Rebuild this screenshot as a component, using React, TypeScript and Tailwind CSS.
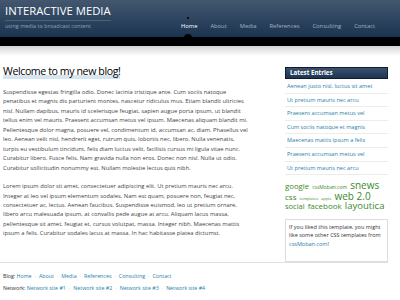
import React from 'react'

const NAV = ['Home', 'About', 'Media', 'References', 'Consulting', 'Contact']

const ENTRIES = [
  'Aenean justo nisl, luctus sit amet',
  'Ut pretium mauris nec arcu',
  'Praesent accumsan metus vel',
  'Cum sociis natoque et magnis',
  'Maecenas mattis ipsum a felis',
  'Praesent accumsan metus vel',
  'Ut pretium mauris nec arcu',
]

const P1 = [
  'Suspendisse egestas fringilla odio. Donec lacinia tristique ante. Cum sociis natoque',
  'penatibus et magnis dis parturient montes, nascetur ridiculus mus. Etiam blandit ultricies',
  'nisl. Nullam dapibus, mauris id scelerisque feugiat, sapien augue porta ipsum, ut blandit',
  'tellus enim vel mauris. Praesent accumsan metus vel ipsum. Maecenas aliquam blandit mi.',
  'Pellentesque dolor magna, posuere vel, condimentum id, accumsan ac, diam. Phasellus vel',
  'leo. Aenean velit nisl, hendrerit eget, rutrum quis, lobortis nec, libero. Nulla venenatis,',
  'turpis eu vestibulum tincidunt, felis diam luctus velit, facilisis cursus mi ligula vitae nunc.',
  'Curabitur libero. Fusce felis. Nam gravida nulla non eros. Donec non nisl. Nulla ut odio.',
  'Curabitur sollicitudin nonummy est. Nullam molestie lectus quis nibh.',
]

const P2 = [
  'Lorem ipsum dolor sit amet, consectetuer adipiscing elit. Ut pretium mauris nec arcu.',
  'Integer at leo vel ipsum elementum sodales. Nam est quam, posuere non, feugiat nec,',
  'consectetuer ac, lectus. Aenean faucibus. Suspendisse euismod, leo ut pretium ornare,',
  'libero arcu malesuada ipsum, at convallis pede augue at arcu. Aliquam lacus massa,',
  'pellentesque sit amet, feugiat et, cursus volutpat, massa. Integer nibh. Maecenas mattis',
  'ipsum a felis. Curabitur sodales lacus at massa. In hac habitasse platea dictumst.',
]

function Dot() {
  return <span className="px-[3px] text-[#9a9a9a]">·</span>
}

function A({ children }: { children: React.ReactNode }) {
  return <span className="text-[#1f7fa8]">{children}</span>
}

export default function App() {
  return (
    <div className="h-[300px] w-[400px] overflow-hidden bg-white font-['Open_Sans',sans-serif]">
      {/* header */}
      <div className="relative h-[37px] bg-gradient-to-b from-[#43576f] to-[#1b3451]">
        <div className="absolute left-[5px] top-[3px]">
          <div className="border-b border-[#4d6178] pb-[1px] text-[11.3px] leading-[16px] text-white">
            INTERACTIVE MEDIA
          </div>
          <div className="mt-[1px] text-[5.5px] text-[#8fa2b8]">using media to broadcast content</div>
        </div>
        <ul className="absolute left-[181px] top-[22px] flex gap-[13px] text-[5.8px] leading-[9px] text-[#a3b2c4]">
          {NAV.map((n, i) => (
            <li key={n} className={i === 0 ? 'relative text-white' : ''}>
              {n}
              {i === 0 ? (
                <>
                  <span className="absolute left-[6px] top-[-5px] h-[2px] w-[2px] rounded-full bg-black" />
                  <span className="absolute left-[3px] top-[12px] h-[8px] w-[8px] rounded-full bg-black" />
                </>
              ) : null}
            </li>
          ))}
        </ul>
      </div>
      <div className="h-[9px] bg-black" />
      <div className="h-[10px] bg-gradient-to-b from-[#d4d4d4] to-white" />

      <div className="flex pl-[3px] pr-[12px]">
        {/* main */}
        <div className="w-[262px]">
          <h1 className="mt-[8px] inline-block bg-[linear-gradient(to_bottom,transparent_72%,#d6e6f1_72%)] text-[10.6px] leading-[15px] tracking-[-0.4px] text-black">
            Welcome to my new blog!
          </h1>
          <p className="mt-[7px] text-[5.8px] leading-[9.45px] text-[#444]">
            {P1.map((l) => (
              <span key={l} className="block whitespace-nowrap">
                {l}
              </span>
            ))}
          </p>
          <p className="mt-[9px] text-[5.8px] leading-[9.45px] text-[#444]">
            {P2.map((l) => (
              <span key={l} className="block whitespace-nowrap">
                {l}
              </span>
            ))}
          </p>
        </div>

        {/* sidebar */}
        <div className="ml-[20px] w-[103px]">
          <div className="mt-[11px] border border-[#0e1d2e] bg-gradient-to-b from-[#3b526c] to-[#1d3552] px-[4px] text-[6.2px] font-bold leading-[10px] text-white">
            Latest Entries
          </div>
          <ul className="mt-[1px]">
            {ENTRIES.map((e, i) => (
              <li
                key={i}
                className="border-b border-[#ececec] pl-[2px] text-[5.6px] leading-[12.6px] text-[#1f7fa8]"
              >
                {e}
              </li>
            ))}
          </ul>
          <div className="mt-[5px] text-[#3b8a2a]">
            <div className="flex h-[10.5px] items-baseline gap-[3px] whitespace-nowrap leading-[10.5px]">
              <span className="text-[7.8px]">google</span>
              <span className="text-[5px]">cssMoban.com</span>
              <span className="text-[10px]">snews</span>
            </div>
            <div className="flex h-[10.5px] items-baseline gap-[3px] whitespace-nowrap leading-[10.5px]">
              <span className="text-[8px]">css</span>
              <span className="text-[4px]">templates</span>
              <span className="text-[4px]">apple</span>
              <span className="text-[10px]">web 2.0</span>
            </div>
            <div className="flex h-[10.5px] items-baseline gap-[3px] whitespace-nowrap leading-[10.5px]">
              <span className="text-[7.5px]">social</span>
              <span className="text-[8px]">facebook</span>
              <span className="text-[9.5px]">layoutica</span>
            </div>
          </div>
          <div className="mt-[7px] border border-[#dcdcdc] px-[3px] pb-[12px] pt-[3px] text-[5.5px] leading-[8.7px] text-[#333]">
            If you liked this template, you might like some other CSS templates from{' '}
            <A>cssMoban.com</A>!
          </div>
        </div>
      </div>

      {/* footer */}
      <div className="mr-[12px] border-t border-[#e0e0e0] pl-[3px] pt-[7px] text-[5.3px] leading-[12px] text-[#333]">
        <div>
          Blog: <A>Home</A>
          <Dot />
          <A>About</A>
          <Dot />
          <A>Media</A>
          <Dot />
          <A>References</A>
          <Dot />
          <A>Consulting</A>
          <Dot />
          <A>Contact</A>
        </div>
        <div>
          Network: <A>Network site #1</A>
          <Dot />
          <A>Network site #2</A>
          <Dot />
          <A>Network site #3</A>
          <Dot />
          <A>Network site #4</A>
        </div>
      </div>
    </div>
  )
}
